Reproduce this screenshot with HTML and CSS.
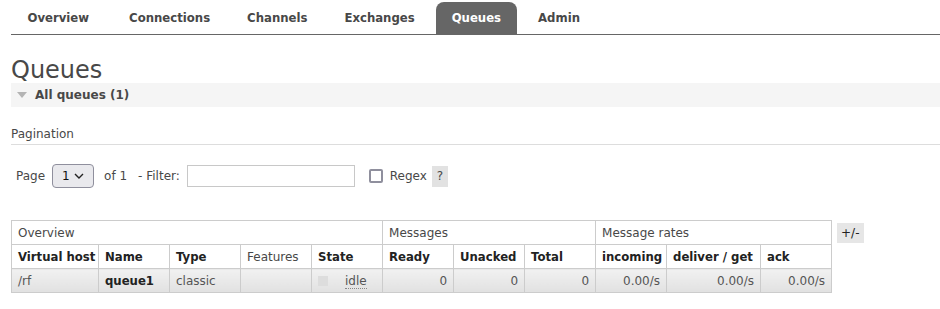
FILE: index.html
```html
<!DOCTYPE html>
<html lang="en">
<head>
  <meta charset="UTF-8">
  <meta name="viewport" content="width=device-width, initial-scale=1.0">
  <title>RabbitMQ Management</title>
  <link rel="stylesheet" href="styles.css">
</head>
<body>
  <div id="menu">
    <ul>
      <li><a href="#">Overview</a></li>
      <li><a href="#">Connections</a></li>
      <li><a href="#">Channels</a></li>
      <li><a href="#">Exchanges</a></li>
      <li><a href="#" class="selected">Queues</a></li>
      <li><a href="#">Admin</a></li>
    </ul>
  </div>

  <div id="main">
    <h1>Queues</h1>
    <div class="section">
      <h2><span class="arrow"></span>All queues (1)</h2>
    </div>

    <!-- 分页 -->
    <div class="pagination">
      <h3>Pagination</h3>
      <div class="filter">
        <span>Page</span>
        <span class="select">1 <svg width="10" height="6" viewBox="0 0 10 6"><path d="M1 1l4 4 4-4" fill="none" stroke="#222" stroke-width="1.4"/></svg></span>
        <span class="of">of 1</span>
        <span>- Filter:</span>
        <span class="text-input"></span>
        <span class="checkbox"></span>
        <span>Regex</span>
        <span class="help">?</span>
      </div>
    </div>

    <!-- 队列列表 -->
    <div class="list">
      <table>
        <colgroup>
          <col style="width:87px">
          <col style="width:71px">
          <col style="width:71px">
          <col style="width:71px">
          <col style="width:71px">
          <col style="width:71px">
          <col style="width:71px">
          <col style="width:71px">
          <col style="width:71px">
          <col style="width:94px">
          <col style="width:71px">
        </colgroup>
        <thead>
          <tr class="group">
            <th colspan="5">Overview</th>
            <th colspan="3">Messages</th>
            <th colspan="3">Message rates</th>
          </tr>
          <tr>
            <th>Virtual host</th>
            <th>Name</th>
            <th>Type</th>
            <th class="plain">Features</th>
            <th>State</th>
            <th>Ready</th>
            <th>Unacked</th>
            <th>Total</th>
            <th>incoming</th>
            <th>deliver / get</th>
            <th>ack</th>
          </tr>
        </thead>
        <tbody>
          <tr>
            <td>/rf</td>
            <td><b>queue1</b></td>
            <td>classic</td>
            <td></td>
            <td class="state"><span class="dot"></span><abbr>idle</abbr></td>
            <td class="r">0</td>
            <td class="r">0</td>
            <td class="r">0</td>
            <td class="r">0.00/s</td>
            <td class="r">0.00/s</td>
            <td class="r">0.00/s</td>
          </tr>
        </tbody>
      </table>
      <span class="toggle">+/-</span>
    </div>
  </div>
</body>
</html>
```

FILE: styles.css
```css
body {
  margin: 0;
  font: 12px Verdana, "DejaVu Sans", sans-serif;
  color: #484848;
  background: white;
}

/* 顶部菜单 */
#menu {
  padding: 2px 0 0 11px;
}
#menu ul {
  display: flex;
  margin: 0;
  padding: 0 0 0 1px;
  list-style: none;
  border-bottom: 1px solid #666;
}
#menu li {
  padding-right: 1px;
}
#menu li:first-child {
  padding-right: 4px;
}
#menu li a {
  display: block;
  padding: 8px 15.5px;
  margin-right: 5px;
  line-height: 16px;
  color: #484848;
  font-weight: bold;
  font-size: 11.7px;
  text-decoration: none;
}
#menu a.selected {
  background: #666;
  color: white;
  border-radius: 8px 8px 0 0;
}

#main {
  padding: 0 0 0 11px;
}

h1 {
  margin: 22px 0 0;
  font-size: 24px;
  font-weight: normal;
  line-height: 26px;
  color: #484848;
}

/* 折叠区块 */
.section h2 {
  display: flex;
  align-items: center;
  margin: 0;
  height: 24px;
  padding-left: 6px;
  background: #f5f5f5;
  font-size: 12px;
  font-weight: bold;
}
.section .arrow {
  width: 0;
  height: 0;
  margin-right: 8px;
  border-left: 5px solid transparent;
  border-right: 5px solid transparent;
  border-top: 6px solid #b4b4b4;
}

/* 分页 */
.pagination h3 {
  margin: 20px 0 0;
  padding-bottom: 3px;
  font-size: 12px;
  font-weight: normal;
  line-height: 14px;
  border-bottom: 1px solid #ddd;
}
.filter {
  display: flex;
  align-items: center;
  margin-top: 19px;
  padding-left: 5px;
  height: 24px;
}
.filter .select {
  display: flex;
  align-items: center;
  justify-content: space-between;
  box-sizing: border-box;
  width: 42px;
  height: 24px;
  margin-left: 7px;
  padding: 0 9px 0 9px;
  background: #e9e9ed;
  border: 1px solid #8f8f9d;
  border-radius: 4px;
  color: #111;
}
.filter .of {
  margin: 0 11px 0 10px;
}
.filter .text-input {
  box-sizing: border-box;
  width: 168px;
  height: 22px;
  margin-left: 7px;
  border: 1px solid #c8c8c8;
  background: white;
}
.filter .checkbox {
  box-sizing: border-box;
  width: 14px;
  height: 14px;
  margin: 0 7px 0 14px;
  border: 2px solid #8f8f9d;
  border-radius: 2px;
}
.filter .help {
  margin-left: 5px;
  padding: 2px 5px;
  background: #e2e2e2;
  line-height: 17px;
}

/* 表格 */
.list {
  display: flex;
  align-items: flex-start;
  margin-top: 32px;
}
table {
  width: 821px;
  border-collapse: collapse;
  table-layout: fixed;
}
th, td {
  height: 23px;
  padding: 0 6px;
  border: 1px solid #ccc;
  text-align: left;
  white-space: nowrap;
  font-size: 12px;
}
th {
  background: white;
  font-weight: bold;
  font-size: 11.7px;
  color: #222;
}
th.plain, tr.group th {
  font-weight: normal;
  font-size: 12px;
  color: #484848;
}
td {
  background: linear-gradient(#f1f1f1, #e1e1e1);
  color: #555;
}
td b {
  color: #222;
  font-size: 11.7px;
}
td.r {
  text-align: right;
}
td.state .dot {
  display: inline-block;
  width: 10px;
  height: 10px;
  margin: 0 17px 0 0;
  background: #ddd;
  vertical-align: -1px;
}
td.state abbr {
  text-decoration: none;
  border-bottom: 1px dotted #888;
}
.toggle {
  margin: 3px 0 0 5px;
  padding: 1px 4px;
  background: #e6e6e6;
  color: #222;
  line-height: 18px;
}
```
